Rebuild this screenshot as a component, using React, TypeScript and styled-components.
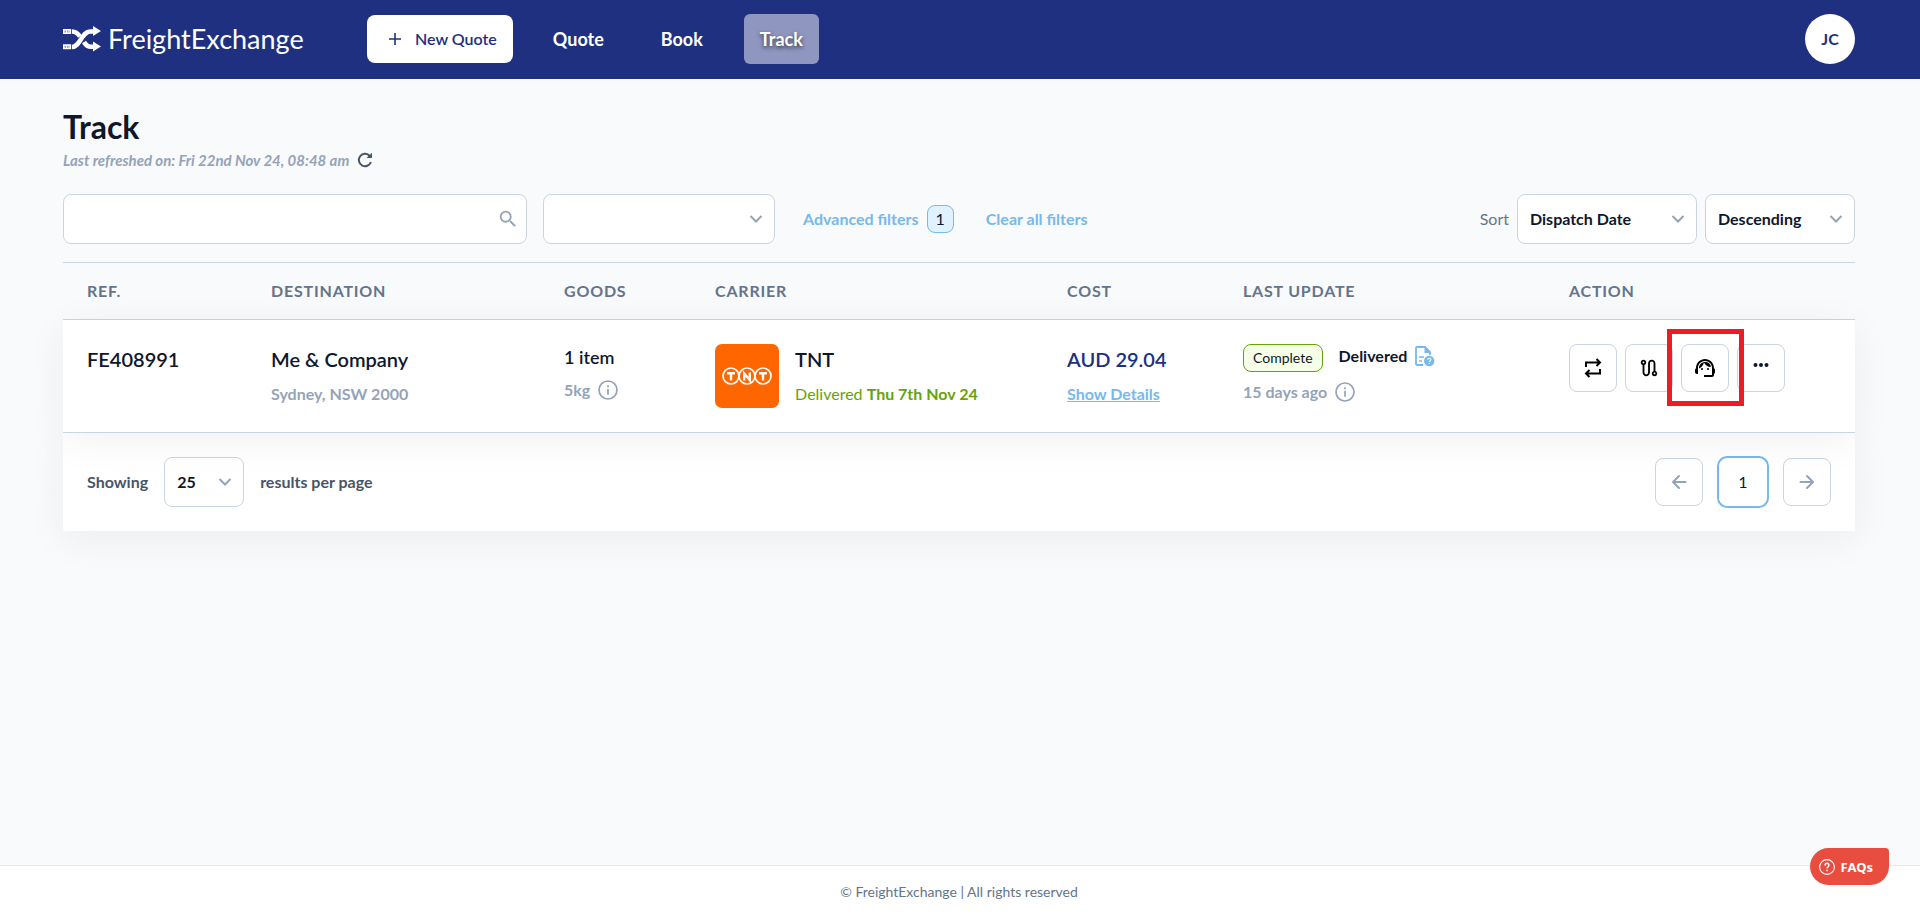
import React from "react";
import styled, { createGlobalStyle, css } from "styled-components";
import { MdOutlineRoute, MdSearch, MdSupportAgent } from "react-icons/md";

const color = {
  navy: "#203080",
  ink: "#0f172a",
  slate: "#64748b",
  slateDark: "#475569",
  muted: "#94a3b8",
  line: "#cbd5e1",
  sky: "#76b9ec",
  page: "#f9fafc",
  green: "#65a30d",
};

const GlobalStyle = createGlobalStyle`
  *, *::before, *::after { box-sizing: border-box; }
  body {
    margin: 0;
    background: ${color.page};
    color: ${color.ink};
    font-family: Lato, "Liberation Sans", sans-serif;
    font-size: 16px;
    line-height: 24px;
  }
  button, input, select { font: inherit; color: inherit; }
  h1, p { margin: 0; }
  svg { display: block; flex: none; }
`;

const gutter = css`
  padding-left: 63px;
  padding-right: 65px;
`;

const Page = styled.div`
  display: flex;
  flex-direction: column;
  min-height: 100vh;
`;

const TopBar = styled.header`
  ${gutter}
  display: flex;
  align-items: center;
  height: 79px;
  padding-bottom: 1px;
  background: ${color.navy};
  color: #fff;
`;

const Brand = styled.a`
  display: flex;
  align-items: center;
  gap: 7px;
  width: 304px;
  color: #fff;
  font-size: 27px;
  line-height: 32px;
  text-decoration: none;
`;

const NewQuote = styled.button`
  display: flex;
  align-items: center;
  gap: 14px;
  height: 48px;
  padding: 0 16px 0 22px;
  border: 0;
  border-radius: 8px;
  background: #fff;
  color: ${color.navy};
  font-weight: 600;
`;

const Nav = styled.nav`
  display: flex;
  gap: 25px;
  margin-left: 24px;
`;

const NavLink = styled.a<{ $active?: boolean }>`
  padding: 13px 16px;
  border-radius: 6px;
  color: #fff;
  font-size: 18px;
  font-weight: 700;
  line-height: 24px;
  text-decoration: none;
  ${(p) =>
    p.$active &&
    css`
      background: #8f97c0;
      text-shadow: 0 2px 4px rgba(0, 0, 0, 0.7);
    `}
`;

const Avatar = styled.button`
  width: 50px;
  height: 50px;
  margin-left: auto;
  padding: 0;
  border: 0;
  border-radius: 50%;
  background: #fff;
  color: ${color.navy};
  font-weight: 700;
`;

const Main = styled.main`
  ${gutter}
  flex: 1;
  padding-top: 28px;
`;

const Title = styled.h1`
  font-size: 32px;
  font-weight: 700;
  line-height: 40px;
`;

const Refreshed = styled.div`
  display: flex;
  align-items: center;
  gap: 8px;
  padding-top: 1px;
  color: ${color.muted};
  font-size: 15px;
  font-style: italic;
  font-weight: 700;
  line-height: 24px;
`;

const IconButton = styled.button`
  display: inline-flex;
  padding: 0;
  border: 0;
  background: none;
`;

const Filters = styled.div`
  display: flex;
  align-items: center;
  gap: 16px;
  margin: 22px 0 18px;
`;

const Field = styled.label<{ $width: number }>`
  position: relative;
  width: ${(p) => p.$width}px;
  svg {
    position: absolute;
    top: 50%;
    right: 12px;
    transform: translateY(-50%);
    color: ${color.muted};
    pointer-events: none;
  }
  input + svg {
    right: 8px;
  }
`;

const control = css`
  display: block;
  width: 100%;
  height: 50px;
  padding: 0 12px;
  border: 1px solid ${color.line};
  border-radius: 8px;
  background: #fff;
  font-weight: 700;
`;

const TextInput = styled.input`
  ${control}
`;

const SelectBox = styled.select`
  ${control}
  appearance: none;
`;

const FilterLink = styled.a`
  display: flex;
  align-items: center;
  gap: 8px;
  margin-left: 12px;
  color: ${color.sky};
  font-weight: 700;
  text-decoration: none;
  white-space: nowrap;
  & + & {
    margin-left: 16px;
  }
`;

const Count = styled.span`
  padding: 1px 8px;
  border: 1px solid ${color.sky};
  border-radius: 8px;
  background: #e0f2fe;
  color: ${color.ink};
  font-weight: 400;
`;

const SortGroup = styled.div`
  display: flex;
  align-items: center;
  gap: 8px;
  margin-left: auto;
  color: ${color.slate};
  select {
    color: ${color.ink};
  }
`;

const Table = styled.table`
  position: relative;
  z-index: 1;
  width: 100%;
  table-layout: fixed;
  border-spacing: 0;
  border-top: 1px solid ${color.line};
`;

const HeadCell = styled.th`
  height: 57px;
  padding: 0 0 0 24px;
  border-bottom: 1px solid ${color.line};
  color: ${color.slate};
  font-weight: 700;
  letter-spacing: 0.05em;
  text-align: left;
  text-transform: uppercase;
`;

const Row = styled.tr`
  background: #fff;
  box-shadow: 0 8px 40px rgba(0, 0, 0, 0.06);
`;

const Cell = styled.td`
  padding: 24px 0 24px 24px;
  border-bottom: 1px solid ${color.line};
  vertical-align: top;
`;

const Primary = styled.div<{ $navy?: boolean }>`
  padding-bottom: 2px;
  color: ${(p) => (p.$navy ? color.navy : color.ink)};
  font-size: 20px;
  font-weight: 600;
  line-height: 30px;
`;

const Secondary = styled.div`
  display: flex;
  align-items: center;
  gap: 8px;
  padding-top: 6px;
  color: ${color.muted};
  font-weight: 700;
`;

const Delivery = styled.div`
  padding-top: 6px;
  color: ${color.green};
`;

const Details = styled.a`
  display: inline-block;
  padding-top: 6px;
  color: ${color.sky};
  font-weight: 700;
`;

const Items = styled.div`
  padding-bottom: 2px;
  font-size: 18px;
  font-weight: 600;
  line-height: 26px;
`;

const Carrier = styled.div`
  display: flex;
  gap: 16px;
`;

const Status = styled.div`
  display: flex;
  align-items: flex-start;
  gap: 8px;
  padding-bottom: 2px;
  font-weight: 700;
`;

const Badge = styled.span`
  margin-right: 8px;
  padding: 2px 9px;
  border: 1px solid ${color.green};
  border-radius: 8px;
  background: #f7fee7;
  font-size: 14px;
  font-weight: 400;
  line-height: 22px;
`;

const Actions = styled.div`
  display: flex;
  gap: 8px;
`;

const SquareButton = styled.button<{ $current?: boolean }>`
  display: flex;
  align-items: center;
  justify-content: center;
  width: 48px;
  height: 48px;
  padding: 0;
  border: 1px solid ${color.line};
  border-radius: 8px;
  background: #fff;
  color: #000;
  ${(p) =>
    p.$current &&
    css`
      border-color: #fff;
      box-shadow: 0 0 0 2px ${color.sky};
      color: ${color.ink};
    `}
`;

const Highlighted = styled.div`
  position: relative;
  &::after {
    content: "";
    position: absolute;
    inset: -15px -15px -14px -14px;
    z-index: 1;
    border: 5px solid #ed1c24;
    pointer-events: none;
  }
`;

const Pager = styled.div`
  display: flex;
  align-items: center;
  justify-content: space-between;
  padding: 24px;
  background: #fff;
  box-shadow: 0 8px 40px rgba(0, 0, 0, 0.06);
  color: ${color.slateDark};
  font-weight: 700;
  select {
    color: ${color.ink};
  }
`;

const PageSize = styled.div`
  display: flex;
  align-items: center;
  gap: 16px;
`;

const Pages = styled.nav`
  display: flex;
  gap: 16px;
  button {
    font-weight: 400;
  }
  svg {
    color: ${color.muted};
  }
`;

const PageFooter = styled.footer`
  ${gutter}
  padding-top: 14px;
  padding-bottom: 16px;
  border-top: 1px solid #e2e8f0;
  background: #fff;
  color: ${color.slate};
  font-size: 14px;
  text-align: center;
`;

const FaqButton = styled.button`
  position: fixed;
  right: 31px;
  bottom: 35px;
  display: flex;
  align-items: center;
  gap: 6px;
  height: 37px;
  padding: 0 16px 0 9px;
  border: 0;
  border-radius: 20px 4px 20px 20px;
  background: #e94d3f;
  color: #fff;
  font-family: "Noto Sans", sans-serif;
  font-size: 13px;
  font-weight: 700;
`;

const BrandMark = () => (
  <svg width="38" height="26" viewBox="0 0 38 26" fill="none" stroke="#fff" aria-hidden="true">
    <path d="M9 21C17 21 19 5.500 27 5.500h4" strokeWidth="4.600" />
    <path d="M9 5.500c4 0 6 2 8 5M21 16c2 3.500 4 4.800 7 4.800h3" strokeWidth="4.600" />
    <path d="M30 0l8 5-8 5zM30 15.500l8 5-8 5z" fill="#fff" stroke="none" />
    <path d="M0 3h8.200v5H0zM0 18.300h8.200v5H0z" fill="#fff" stroke="none" />
    <path d="M1.500 5.500h5.500M1.500 20.800h5.500" stroke="#8f97c0" strokeWidth="2" strokeDasharray="1.500 1" />
  </svg>
);

const PlusIcon = () => (
  <svg width="12" height="12" viewBox="0 0 12 12" stroke="currentColor" strokeWidth="1.600" aria-hidden="true">
    <path d="M6 0v12M0 6h12" />
  </svg>
);

const ReloadIcon = () => (
  <svg width="16" height="16" viewBox="0 0 16 16" fill="none" stroke={color.slateDark} strokeWidth="2" aria-hidden="true">
    <path d="M13.900 10A6.200 6.200 0 1 1 12.200 3.400L14.300 5.300" />
    <path d="M15 .8v5.200H9.500z" fill={color.slateDark} stroke="none" />
  </svg>
);

const ChevronIcon = () => (
  <svg width="14" height="14" viewBox="0 0 14 14" fill="none" stroke="currentColor" strokeWidth="2" aria-hidden="true">
    <path d="M1.500 4 7 9.500 12.500 4" />
  </svg>
);

const InfoIcon = () => (
  <svg width="20" height="20" viewBox="0 0 20 20" fill="none" stroke={color.muted} strokeWidth="1.700" role="img" aria-label="More information">
    <circle cx="10" cy="10" r="9" />
    <path d="M10 8.700v6M10 5.200v2" />
  </svg>
);

const ProofIcon = () => (
  <svg width="20" height="24" viewBox="0 -2 20 24" fill="none" role="img" aria-label="Proof of delivery">
    <path d="M8 19H1.900C1.400 19 1 18.600 1 18.100V1.900C1 1.400 1.400 1 1.900 1H10l5 5v3" stroke={color.sky} strokeWidth="1.800" />
    <path d="M9.500 0 16 6.500V7H9.500z" fill={color.sky} />
    <path d="M4 11h5M4 15h3" stroke={color.sky} strokeWidth="1.600" />
    <circle cx="14.200" cy="15" r="5.200" fill={color.sky} />
    <path d="M12.700 13.800c0-2.200 3.200-2 3.100-.1 0 1.200-1.500 1.100-1.500 2.300M14.300 17v1" stroke="#fff" strokeWidth="1.100" />
  </svg>
);

const SwapIcon = () => (
  <svg width="18" height="20" viewBox="0 0 18 20" fill="none" stroke="currentColor" strokeWidth="2" aria-hidden="true">
    <path d="M2 9V4.500h14M12.500 1l3.500 3.500L12.500 8" />
    <path d="M16 11v4.500H2M5.500 12 2 15.500 5.500 19" />
  </svg>
);

const DotsIcon = () => (
  <svg width="16" height="24" viewBox="0 0 16 24" fill={color.ink} aria-hidden="true">
    <circle cx="2.500" cy="9" r="2" />
    <circle cx="8" cy="9" r="2" />
    <circle cx="13.500" cy="9" r="2" />
  </svg>
);

const ArrowIcon = ({ back }: { back?: boolean }) => (
  <svg width="16" height="16" viewBox="0 0 16 16" fill="none" stroke="currentColor" strokeWidth="2" strokeLinejoin="round" strokeLinecap="round" aria-hidden="true">
    <path d={back ? "M14.500 8H2M8 2 2 8l6 6" : "M1.500 8H14M8 2l6 6-6 6"} />
  </svg>
);

const HelpIcon = () => (
  <svg width="16" height="16" viewBox="0 0 16 16" fill="none" stroke="#fff" aria-hidden="true">
    <circle cx="8" cy="8" r="7.400" strokeWidth="1.100" />
    <path d="M6.100 6.400C6.100 3.600 10 3.800 9.900 6.200 9.900 7.800 8 7.700 8 9.600M8 10.700v1.500" strokeWidth="1.500" />
  </svg>
);

const CarrierLogo = () => (
  <svg width="64" height="64" viewBox="0 0 64 64" fill="none" stroke="#fff" role="img" aria-label="TNT logo">
    <rect width="64" height="64" rx="7" fill="#f60" stroke="none" />
    <g strokeWidth="1.700">
      <circle cx="16" cy="32" r="8" />
      <circle cx="48" cy="32" r="8" />
      <circle cx="32" cy="32" r="8" fill="#f60" />
    </g>
    <path d="M12 29.300h8M16 29v7.500M44 29.300h8M48 29v7.500M29.200 36.500v-7l5.600 6.500v-7.500" strokeWidth="2.400" />
  </svg>
);

const columns = [
  { label: "Ref.", width: "10.27%" },
  { label: "Destination", width: "16.35%" },
  { label: "Goods", width: "8.43%" },
  { label: "Carrier", width: "19.64%" },
  { label: "Cost", width: "9.82%" },
  { label: "Last update", width: "18.19%" },
  { label: "Action", width: "17.3%" },
];

function Select({ label, width, value }: { label: string; width: number; value: string }) {
  return (
    <Field $width={width}>
      <SelectBox aria-label={label} defaultValue={value}>
        <option value={value}>{value}</option>
      </SelectBox>
      <ChevronIcon />
    </Field>
  );
}

export default function App() {
  return (
    <Page>
      <GlobalStyle />
      <TopBar>
        <Brand href="#">
          <BrandMark />
          FreightExchange
        </Brand>
        <NewQuote type="button">
          <PlusIcon />
          New Quote
        </NewQuote>
        <Nav>
          <NavLink href="#quote">Quote</NavLink>
          <NavLink href="#book">Book</NavLink>
          <NavLink href="#track" $active aria-current="page">
            Track
          </NavLink>
        </Nav>
        <Avatar type="button">JC</Avatar>
      </TopBar>

      <Main>
        <Title>Track</Title>
        <Refreshed>
          Last refreshed on: Fri 22nd Nov 24, 08:48 am
          <IconButton type="button" aria-label="Refresh">
            <ReloadIcon />
          </IconButton>
        </Refreshed>

        <Filters>
          <Field $width={464}>
            <TextInput type="text" aria-label="Search" />
            <MdSearch size={22} />
          </Field>
          <Select label="Status" width={232} value="" />
          <FilterLink href="#filters">
            Advanced filters <Count>1</Count>
          </FilterLink>
          <FilterLink href="#clear">Clear all filters</FilterLink>
          <SortGroup>
            <span>Sort</span>
            <Select label="Sort by" width={180} value="Dispatch Date" />
            <Select label="Sort order" width={150} value="Descending" />
          </SortGroup>
        </Filters>

        <Table>
          <colgroup>
            {columns.map((c) => (
              <col key={c.label} style={{ width: c.width }} />
            ))}
          </colgroup>
          <thead>
            <tr>
              {columns.map((c) => (
                <HeadCell key={c.label} scope="col">
                  {c.label}
                </HeadCell>
              ))}
            </tr>
          </thead>
          <tbody>
            <Row>
              <Cell>
                <Primary>FE408991</Primary>
              </Cell>
              <Cell>
                <Primary>Me &amp; Company</Primary>
                <Secondary>Sydney, NSW 2000</Secondary>
              </Cell>
              <Cell>
                <Items>1 item</Items>
                <Secondary>
                  5kg <InfoIcon />
                </Secondary>
              </Cell>
              <Cell>
                <Carrier>
                  <CarrierLogo />
                  <div>
                    <Primary>TNT</Primary>
                    <Delivery>
                      Delivered <strong>Thu 7th Nov 24</strong>
                    </Delivery>
                  </div>
                </Carrier>
              </Cell>
              <Cell>
                <Primary $navy>AUD 29.04</Primary>
                <Details href="#details">Show Details</Details>
              </Cell>
              <Cell>
                <Status>
                  <Badge>Complete</Badge>
                  <span>Delivered</span>
                  <ProofIcon />
                </Status>
                <Secondary>
                  15 days ago <InfoIcon />
                </Secondary>
              </Cell>
              <Cell>
                <Actions>
                  <SquareButton type="button" aria-label="Repeat booking">
                    <SwapIcon />
                  </SquareButton>
                  <SquareButton type="button" aria-label="Tracking route">
                    <MdOutlineRoute size={22} />
                  </SquareButton>
                  <Highlighted>
                    <SquareButton type="button" aria-label="Contact support">
                      <MdSupportAgent size={24} />
                    </SquareButton>
                  </Highlighted>
                  <SquareButton type="button" aria-label="More actions">
                    <DotsIcon />
                  </SquareButton>
                </Actions>
              </Cell>
            </Row>
          </tbody>
        </Table>

        <Pager>
          <PageSize>
            <span>Showing</span>
            <Select label="Results per page" width={80} value="25" />
            <span>results per page</span>
          </PageSize>
          <Pages aria-label="Pagination">
            <SquareButton type="button" aria-label="Previous page">
              <ArrowIcon back />
            </SquareButton>
            <SquareButton type="button" $current aria-current="page">
              1
            </SquareButton>
            <SquareButton type="button" aria-label="Next page">
              <ArrowIcon />
            </SquareButton>
          </Pages>
        </Pager>
      </Main>

      <PageFooter>© FreightExchange | All rights reserved</PageFooter>
      <FaqButton type="button">
        <HelpIcon />
        FAQs
      </FaqButton>
    </Page>
  );
}
